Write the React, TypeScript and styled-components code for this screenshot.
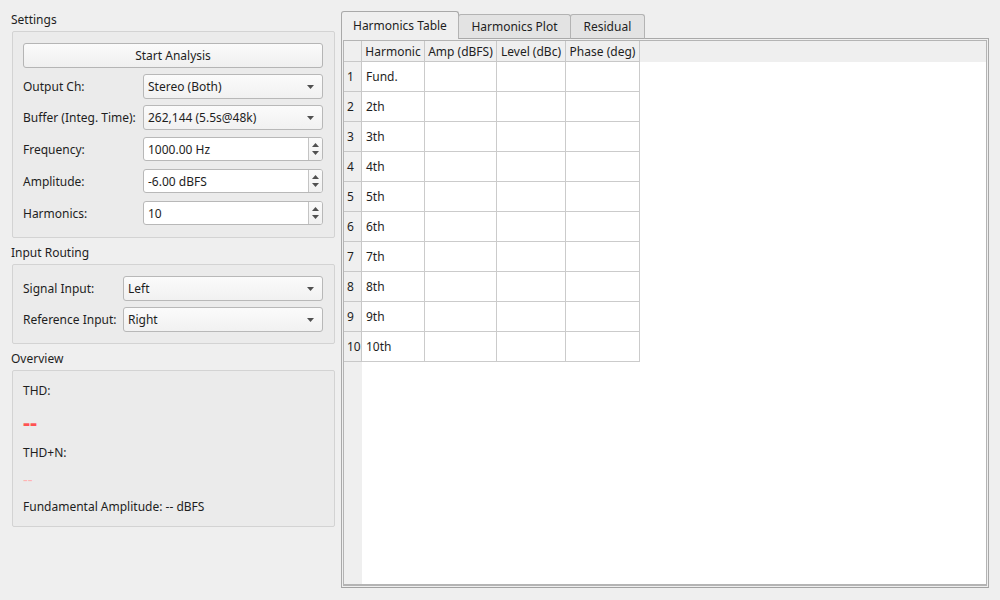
import styled, { createGlobalStyle } from 'styled-components';

const GlobalStyle = createGlobalStyle`
  html, body {
    margin: 0;
    padding: 0;
    background: #efefef;
  }
  body {
    font-family: "Noto Sans", "DejaVu Sans", sans-serif;
    font-size: 12px;
    color: #1e1e1e;
  }
`;

const Window = styled.div`
  display: flex;
  gap: 6px;
  width: 1000px;
  height: 600px;
  box-sizing: border-box;
  padding: 11px 11px 12px 11px;
`;

const LeftColumn = styled.div`
  display: flex;
  flex-direction: column;
  width: 324px;
  flex-shrink: 0;
`;

const GroupTitle = styled.div`
  line-height: 17px;
  height: 17px;
  margin-bottom: 3px;
`;

const GroupBox = styled.div`
  margin-left: 1px;
  margin-bottom: 6px;
  border: 1px solid #d3d3d3;
  border-radius: 2px;
  background: #ebebeb;
  padding: 11px 11px 11px 10px;
`;

const FormGrid = styled.div<{ $labelWidth: number; $rows: string }>`
  display: grid;
  grid-template-columns: ${(p) => p.$labelWidth}px 1fr;
  grid-template-rows: ${(p) => p.$rows};
  row-gap: 6px;
  align-items: center;
`;

const FieldLabel = styled.div`
  white-space: nowrap;
  line-height: 17px;
`;

const PushButton = styled.div`
  grid-column: 1 / -1;
  height: 25px;
  box-sizing: border-box;
  display: flex;
  align-items: center;
  justify-content: center;
  border: 1px solid #b5b5b5;
  border-radius: 3px;
  background: linear-gradient(#fbfbfb, #efefef);
`;

const Combo = styled.div`
  height: 25px;
  box-sizing: border-box;
  display: flex;
  align-items: center;
  justify-content: space-between;
  padding: 0 8px 0 4px;
  border: 1px solid #b8b8b8;
  border-radius: 3px;
  background: linear-gradient(#fbfbfb, #f1f1f1);
`;

const SpinBox = styled.div`
  height: 24px;
  box-sizing: border-box;
  display: flex;
  border: 1px solid #b8b8b8;
  border-radius: 3px;
  background: #ffffff;
  overflow: hidden;
`;

const SpinText = styled.div`
  flex: 1;
  display: flex;
  align-items: center;
  padding-left: 4px;
`;

const SpinButtons = styled.div`
  width: 13px;
  border-left: 1px solid #c4c4c4;
  background: linear-gradient(#fafafa, #f0f0f0);
  display: flex;
  flex-direction: column;
  align-items: center;
  justify-content: center;
  gap: 4px;
`;

const OverviewLine = styled.div<{ $gap: number }>`
  line-height: 17px;
  margin-top: ${(p) => p.$gap}px;
`;

const OverviewValue = styled.div<{ $gap: number; $strong?: boolean }>`
  margin-top: ${(p) => p.$gap}px;
  color: ${(p) => (p.$strong ? '#ff5252' : '#ffb3b3')};
  font-size: ${(p) => (p.$strong ? '22px' : '15px')};
  font-weight: ${(p) => (p.$strong ? 700 : 400)};
  line-height: ${(p) => (p.$strong ? '24px' : '17px')};
`;

const RightColumn = styled.div`
  flex: 1;
  display: flex;
  flex-direction: column;
  min-width: 0;
`;

const TabBar = styled.div`
  display: flex;
  align-items: flex-end;
  height: 28px;
  margin-bottom: -1px;
  position: relative;
  z-index: 1;
`;

const Tab = styled.div<{ $active?: boolean }>`
  box-sizing: border-box;
  height: ${(p) => (p.$active ? '28px' : '25px')};
  padding: 0 ${(p) => (p.$active ? '11px' : '12.5px')};
  display: flex;
  align-items: center;
  white-space: nowrap;
  border: 1px solid ${(p) => (p.$active ? '#a9a9a9' : '#b3b3b3')};
  border-bottom: ${(p) => (p.$active ? 'none' : '1px solid #a9a9a9')};
  border-radius: 3px 3px 0 0;
  background: ${(p) => (p.$active ? '#efefef' : '#e3e3e3')};
  & + & {
    margin-left: -1px;
  }
`;

const Pane = styled.div`
  flex: 1;
  display: flex;
  border: 1px solid #a9a9a9;
  border-bottom-color: #a2a2a2;
  padding: 1px;
  background: #efefef;
`;

const Table = styled.div`
  flex: 1;
  display: grid;
  grid-template-columns: 18px 63px 72px 69px 74px 1fr;
  grid-template-rows: 21px repeat(10, 30px) 1fr;
  border: 1px solid #b4b4b4;
  border-bottom-width: 2px;
  background: #ffffff;
`;

const HeaderCell = styled.div<{ $fill?: boolean }>`
  box-sizing: border-box;
  background: #efefef;
  border-right: ${(p) => (p.$fill ? 'none' : '1px solid #c8c8c8')};
  border-bottom: ${(p) => (p.$fill ? 'none' : '1px solid #c8c8c8')};
  display: flex;
  align-items: center;
  justify-content: center;
  white-space: nowrap;
`;

const RowHeader = styled.div`
  box-sizing: border-box;
  background: #efefef;
  border-right: 1px solid #c8c8c8;
  border-bottom: 1px solid #c8c8c8;
  display: flex;
  align-items: center;
  padding-left: 3px;
`;

const Cell = styled.div`
  box-sizing: border-box;
  border-right: 1px solid #cbcbcb;
  border-bottom: 1px solid #cbcbcb;
  display: flex;
  align-items: center;
  padding-left: 4px;
`;

const Blank = styled.div<{ $grey?: boolean; $span?: boolean }>`
  background: ${(p) => (p.$grey ? '#efefef' : '#ffffff')};
  grid-column: ${(p) => (p.$span ? '2 / -1' : 'auto')};
`;

function DownArrow() {
  return (
    <svg width="7" height="4" viewBox="0 0 7 4">
      <polygon points="0,0 7,0 3.5,4" fill="#505050" />
    </svg>
  );
}

function SpinArrows() {
  return (
    <SpinButtons>
      <svg width="7" height="4" viewBox="0 0 7 4">
        <polygon points="0,4 7,4 3.5,0" fill="#505050" />
      </svg>
      <svg width="7" height="4" viewBox="0 0 7 4">
        <polygon points="0,0 7,0 3.5,4" fill="#505050" />
      </svg>
    </SpinButtons>
  );
}

const harmonics = ['Fund.', '2th', '3th', '4th', '5th', '6th', '7th', '8th', '9th', '10th'];

export default function App() {
  return (
    <>
      <GlobalStyle />
      <Window>
        <LeftColumn>
          <GroupTitle>Settings</GroupTitle>
          <GroupBox>
            <FormGrid $labelWidth={120} $rows="25px 25px 25px 26px 26px 26px">
              <PushButton>Start Analysis</PushButton>
              <FieldLabel>Output Ch:</FieldLabel>
              <Combo>
                Stereo (Both)
                <DownArrow />
              </Combo>
              <FieldLabel>Buffer (Integ. Time):</FieldLabel>
              <Combo>
                262,144 (5.5s@48k)
                <DownArrow />
              </Combo>
              <FieldLabel>Frequency:</FieldLabel>
              <SpinBox>
                <SpinText>1000.00 Hz</SpinText>
                <SpinArrows />
              </SpinBox>
              <FieldLabel>Amplitude:</FieldLabel>
              <SpinBox>
                <SpinText>-6.00 dBFS</SpinText>
                <SpinArrows />
              </SpinBox>
              <FieldLabel>Harmonics:</FieldLabel>
              <SpinBox>
                <SpinText>10</SpinText>
                <SpinArrows />
              </SpinBox>
            </FormGrid>
          </GroupBox>

          <GroupTitle>Input Routing</GroupTitle>
          <GroupBox>
            <FormGrid $labelWidth={100} $rows="25px 25px">
              <FieldLabel>Signal Input:</FieldLabel>
              <Combo>
                Left
                <DownArrow />
              </Combo>
              <FieldLabel>Reference Input:</FieldLabel>
              <Combo>
                Right
                <DownArrow />
              </Combo>
            </FormGrid>
          </GroupBox>

          <GroupTitle>Overview</GroupTitle>
          <GroupBox>
            <OverviewLine $gap={0}>THD:</OverviewLine>
            <OverviewValue $gap={10} $strong>--</OverviewValue>
            <OverviewLine $gap={11}>THD+N:</OverviewLine>
            <OverviewValue $gap={10}>--</OverviewValue>
            <OverviewLine $gap={10}>Fundamental Amplitude: -- dBFS</OverviewLine>
          </GroupBox>
        </LeftColumn>

        <RightColumn>
          <TabBar>
            <Tab $active>Harmonics Table</Tab>
            <Tab>Harmonics Plot</Tab>
            <Tab>Residual</Tab>
          </TabBar>
          <Pane>
            <Table>
              <HeaderCell />
              <HeaderCell>Harmonic</HeaderCell>
              <HeaderCell>Amp (dBFS)</HeaderCell>
              <HeaderCell>Level (dBc)</HeaderCell>
              <HeaderCell>Phase (deg)</HeaderCell>
              <HeaderCell $fill />
              {harmonics.map((name, i) => (
                <Row key={name} index={i + 1} name={name} />
              ))}
              <Blank $grey />
              <Blank $span />
            </Table>
          </Pane>
        </RightColumn>
      </Window>
    </>
  );
}

function Row({ index, name }: { index: number; name: string }) {
  return (
    <>
      <RowHeader>{index}</RowHeader>
      <Cell>{name}</Cell>
      <Cell />
      <Cell />
      <Cell />
      <Blank />
    </>
  );
}
